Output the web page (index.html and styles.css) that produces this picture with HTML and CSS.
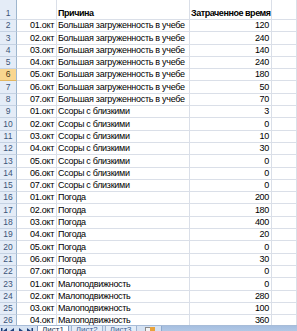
FILE: index.html
```html
<!DOCTYPE html>
<html lang="ru">
<head>
<meta charset="utf-8">
<title>Лист1</title>
<link rel="stylesheet" href="styles.css">
</head>
<body>
<div class="sheet">
  <div class="rh">1</div><div class="c"></div><div class="c b">Причина</div><div class="c b">Затраченное время</div><div class="c"></div>
  <div class="rh">2</div><div class="c d">01.окт</div><div class="c">Большая загруженность в учебе</div><div class="c n">120</div><div class="c"></div>
  <div class="rh">3</div><div class="c d">02.окт</div><div class="c">Большая загруженность в учебе</div><div class="c n">240</div><div class="c"></div>
  <div class="rh">4</div><div class="c d">03.окт</div><div class="c">Большая загруженность в учебе</div><div class="c n">140</div><div class="c"></div>
  <div class="rh">5</div><div class="c d">04.окт</div><div class="c">Большая загруженность в учебе</div><div class="c n">240</div><div class="c"></div>
  <div class="rh sel">6</div><div class="c d">05.окт</div><div class="c">Большая загруженность в учебе</div><div class="c n">180</div><div class="c"></div>
  <div class="rh">7</div><div class="c d">06.окт</div><div class="c">Большая загруженность в учебе</div><div class="c n">50</div><div class="c"></div>
  <div class="rh">8</div><div class="c d">07.окт</div><div class="c">Большая загруженность в учебе</div><div class="c n">70</div><div class="c"></div>
  <div class="rh">9</div><div class="c d">01.окт</div><div class="c">Ссоры с близкими</div><div class="c n">3</div><div class="c"></div>
  <div class="rh">10</div><div class="c d">02.окт</div><div class="c">Ссоры с близкими</div><div class="c n">0</div><div class="c"></div>
  <div class="rh">11</div><div class="c d">03.окт</div><div class="c">Ссоры с близкими</div><div class="c n">10</div><div class="c"></div>
  <div class="rh">12</div><div class="c d">04.окт</div><div class="c">Ссоры с близкими</div><div class="c n">30</div><div class="c"></div>
  <div class="rh">13</div><div class="c d">05.окт</div><div class="c">Ссоры с близкими</div><div class="c n">0</div><div class="c"></div>
  <div class="rh">14</div><div class="c d">06.окт</div><div class="c">Ссоры с близкими</div><div class="c n">0</div><div class="c"></div>
  <div class="rh">15</div><div class="c d">07.окт</div><div class="c">Ссоры с близкими</div><div class="c n">0</div><div class="c"></div>
  <div class="rh">16</div><div class="c d">01.окт</div><div class="c">Погода</div><div class="c n">200</div><div class="c"></div>
  <div class="rh">17</div><div class="c d">02.окт</div><div class="c">Погода</div><div class="c n">180</div><div class="c"></div>
  <div class="rh">18</div><div class="c d">03.окт</div><div class="c">Погода</div><div class="c n">400</div><div class="c"></div>
  <div class="rh">19</div><div class="c d">04.окт</div><div class="c">Погода</div><div class="c n">20</div><div class="c"></div>
  <div class="rh">20</div><div class="c d">05.окт</div><div class="c">Погода</div><div class="c n">0</div><div class="c"></div>
  <div class="rh">21</div><div class="c d">06.окт</div><div class="c">Погода</div><div class="c n">30</div><div class="c"></div>
  <div class="rh">22</div><div class="c d">07.окт</div><div class="c">Погода</div><div class="c n">0</div><div class="c"></div>
  <div class="rh">23</div><div class="c d">01.окт</div><div class="c">Малоподвижность</div><div class="c n">0</div><div class="c"></div>
  <div class="rh">24</div><div class="c d">02.окт</div><div class="c">Малоподвижность</div><div class="c n">280</div><div class="c"></div>
  <div class="rh">25</div><div class="c d">03.окт</div><div class="c">Малоподвижность</div><div class="c n">100</div><div class="c"></div>
  <div class="rh">26</div><div class="c d">04.окт</div><div class="c">Малоподвижность</div><div class="c n">360</div><div class="c"></div>
</div>
<div class="tabbar">
  <div class="nav">
    <svg width="36" height="8" viewBox="0 0 36 8">
      <rect x="1" y="1" width="1.5" height="6" fill="#1f3f7a"/>
      <path d="M7 1 L3 4 L7 7 Z" fill="#1f3f7a"/>
      <path d="M14 1 L10 4 L14 7 Z" fill="#1f3f7a"/>
      <path d="M19 1 L23 4 L19 7 Z" fill="#1f3f7a"/>
      <path d="M27 1 L31 4 L27 7 Z" fill="#1f3f7a"/>
      <rect x="31.5" y="1" width="1.5" height="6" fill="#1f3f7a"/>
    </svg>
  </div>
  <div class="tab active">Лист1</div>
  <div class="tab">Лист2</div>
  <div class="tab">Лист3</div>
  <div class="newtab">
    <svg width="10" height="9" viewBox="0 0 10 9">
      <rect x="0.5" y="0.5" width="8" height="8" fill="#f4f4f4" stroke="#8a8a8a"/>
      <rect x="5" y="0" width="5" height="4" fill="#e8a23a"/>
    </svg>
  </div>
  <div class="hscroll"></div>
</div>
</body>
</html>
```
FILE: styles.css
```css
html, body {
  margin: 0;
  padding: 0;
  overflow: hidden;
  background: #ffffff;
}
body {
  width: 297px;
  height: 331px;
  font-family: "Liberation Sans", Arial, sans-serif;
  font-size: 9px;
  letter-spacing: -0.3px;
  color: #000;
}
.sheet {
  height: 325px;
  overflow: hidden;
  display: grid;
  grid-template-columns: 17px 40px 133px 82px 1fr;
  grid-template-rows: 20px;
  grid-auto-rows: 12.3px;
}
.c, .rh {
  box-sizing: border-box;
  border-right: 1px solid #dadfe8;
  border-bottom: 1px solid #dadfe8;
  display: flex;
  align-items: flex-end;
  line-height: 11px;
  padding: 0 2px 0 1px;
  white-space: nowrap;
  overflow: hidden;
}
.rh {
  background: #e4ecf7;
  border-right: 1px solid #9eb6ce;
  border-bottom: 1px solid #c5d2e3;
  color: #3b5578;
  justify-content: center;
  padding: 0;
  font-size: 8.5px;
  letter-spacing: 0;
}
.rh.sel {
  background: #f9d68f;
  border-bottom-color: #e3b760;
  color: #4a3a1a;
}
.b {
  font-weight: bold;
  letter-spacing: -0.45px;
}
.d, .n { justify-content: flex-end; }
.tabbar {
  height: 18px;
  display: flex;
  align-items: flex-start;
  background: #d5e2f2;
  border-top: 1px solid #a7bcd8;
  font-size: 8px;
  letter-spacing: 0;
}
.nav {
  width: 37px;
  padding-top: 1px;
}
.tab {
  height: 12px;
  padding: 0 4px;
  margin-right: 2px;
  color: #3a5f94;
  background: #e3ecf7;
  border: 1px solid #9db3d1;
  border-top: none;
  line-height: 8px;
}
.tab.active {
  background: #ffffff;
  color: #1a2e50;
  border-color: #7e98bf;
}
.newtab {
  width: 14px;
  padding: 1px 0 0 6px;
}
.hscroll {
  flex: 1;
  height: 14px;
  margin-left: 2px;
  background: linear-gradient(#a6bfe0, #c4d6ee);
  border-left: 1px solid #8fa9cc;
}
```
